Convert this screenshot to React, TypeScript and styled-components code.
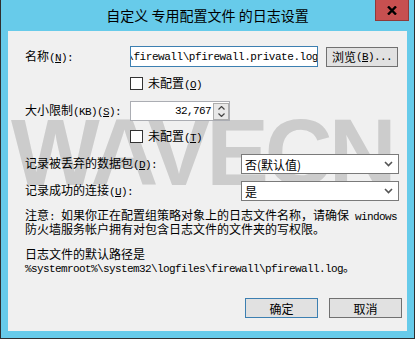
import styled, { createGlobalStyle } from 'styled-components'

const GlobalStyle = createGlobalStyle`
  html, body {
    margin: 0;
    padding: 0;
    background: #ffffff;
  }
  body {
    font-family: "Noto Sans CJK SC", "Liberation Sans", sans-serif;
    color: #000;
  }
`

const Window = styled.div`
  width: 415px;
  height: 339px;
  box-sizing: border-box;
  background: #67cbea;
  border: 1px solid #2f2f2f;
  border-top: none;
  padding: 0 7px 7px 7px;
  display: flex;
  flex-direction: column;
`

const TitleBar = styled.div`
  height: 31px;
  margin: 0 -7px;
  display: grid;
  grid-template-columns: 1fr auto 1fr;
  align-items: start;
`

const Title = styled.div`
  grid-column: 2;
  font-size: 14px;
  line-height: 30px;
  white-space: nowrap;
`

const CloseBtn = styled.div`
  grid-column: 3;
  justify-self: end;
  margin-right: 5px;
  width: 34px;
  height: 21px;
  box-sizing: border-box;
  background: #c75050;
  border: 1px solid #8f3a3a;
  border-top: none;
  display: flex;
  align-items: center;
  justify-content: center;
`

const Client = styled.div`
  flex: 1;
  background: #f0f0f0;
  position: relative;
  overflow: hidden;
`

const Watermark = styled.div`
  position: absolute;
  left: 3px;
  top: 75px;
  font-family: "Liberation Sans", Arial, sans-serif;
  font-weight: 700;
  font-size: 94px;
  line-height: 94px;
  letter-spacing: -4px;
  color: #cccccc;
  white-space: nowrap;
  pointer-events: none;
  z-index: 0;
`

const Content = styled.div`
  position: relative;
  z-index: 1;
  display: flex;
  flex-direction: column;
  padding: 15px 5px 0 17px;
  font-size: 12px;
`

const Row = styled.div<{ top: number; h: number }>`
  display: flex;
  align-items: center;
  margin-top: ${({ top }) => top}px;
  height: ${({ h }) => h}px;
`

const Label = styled.div<{ w: number }>`
  width: ${({ w }) => w}px;
  flex: none;
  font-size: 12px;
  line-height: 14px;
  white-space: nowrap;
`

const Mono = styled.span`
  font-family: "Liberation Mono", monospace;
  font-size: 11px;
  letter-spacing: -0.6px;
`

const PathInput = styled.div`
  width: 188px;
  height: 21px;
  box-sizing: border-box;
  border: 1px solid #3c7fb1;
  background: #fff;
  display: flex;
  justify-content: flex-end;
  align-items: center;
  overflow: hidden;
  white-space: nowrap;
  padding-right: 1px;
  font-family: "Liberation Mono", monospace;
  font-size: 11px;
  letter-spacing: -0.45px;
`

const Caret = styled.span`
  display: inline-block;
  width: 1px;
  height: 12px;
  background: #000;
  margin-left: -2px;
`

const Button = styled.div<{ w: number; primary?: boolean }>`
  width: ${({ w }) => w}px;
  height: 20px;
  box-sizing: border-box;
  background: #e1e1e1;
  border: 1px solid ${({ primary }) => (primary ? '#3c7fb1' : '#707070')};
  display: flex;
  align-items: center;
  justify-content: center;
  font-size: 12px;
  white-space: nowrap;
`

const BrowseButton = styled(Button)`
  margin-left: 8px;
`

const CheckRow = styled.div<{ top: number }>`
  display: flex;
  align-items: center;
  gap: 5px;
  margin-top: ${({ top }) => top}px;
  margin-left: 105px;
  height: 13px;
  font-size: 12px;
  line-height: 14px;
`

const Box = styled.span`
  width: 13px;
  height: 13px;
  box-sizing: border-box;
  border: 1px solid #333;
  background: #fff;
  flex: none;
`

const NumberField = styled.div`
  width: 100px;
  height: 20px;
  box-sizing: border-box;
  border: 1px solid #abadb3;
  background: #fff;
  display: flex;
`

const NumberValue = styled.div`
  flex: 1;
  text-align: right;
  padding-right: 2px;
  font-family: "Liberation Mono", monospace;
  font-size: 11px;
  letter-spacing: -0.6px;
  line-height: 18px;
`

const Spinner = styled.div`
  width: 16px;
  box-sizing: border-box;
  border: 1px solid #adadad;
  margin-top: 1px;
  background: #e8e8e8;
  display: flex;
  flex-direction: column;
`

const SpinHalf = styled.div`
  flex: 1;
  display: flex;
  align-items: center;
  justify-content: center;
`

const Select = styled.div`
  width: 158px;
  height: 20px;
  box-sizing: border-box;
  border: 1px solid #7a7a7a;
  background: #fff;
  display: flex;
  align-items: center;
  justify-content: space-between;
  padding: 0 5px 0 3px;
  font-size: 12px;
`

const Note = styled.div<{ top: number; lh: number }>`
  margin-top: ${({ top }) => top}px;
  font-size: 12px;
  line-height: ${({ lh }) => lh}px;
  white-space: nowrap;
`

const Footer = styled.div`
  display: flex;
  justify-content: flex-end;
  gap: 11px;
  margin-top: 22px;
`

function Chevron({ up }: { up?: boolean }) {
  return (
    <svg width="7" height="4" viewBox="0 0 7 4">
      <polyline
        points={up ? '0.5,3.5 3.5,0.5 6.5,3.5' : '0.5,0.5 3.5,3.5 6.5,0.5'}
        fill="none"
        stroke="#444"
        strokeWidth="1.2"
      />
    </svg>
  )
}

function DropArrow() {
  return (
    <svg width="9" height="6" viewBox="0 0 9 6">
      <polyline points="1,1 4.5,4.5 8,1" fill="none" stroke="#555" strokeWidth="1.6" />
    </svg>
  )
}

export default function App() {
  return (
    <>
      <GlobalStyle />
      <Window>
        <TitleBar>
          <Title>自定义 专用配置文件 的日志设置</Title>
          <CloseBtn>
            <svg width="10" height="9" viewBox="0 0 10 9">
              <path d="M1 0.5 L9 8.5 M9 0.5 L1 8.5" stroke="#000" strokeWidth="2.4" />
            </svg>
          </CloseBtn>
        </TitleBar>
        <Client>
          <Watermark>WAVECN</Watermark>
          <Content>
            <Row top={0} h={21}>
              <Label w={105}>
                名称<Mono>(<u>N</u>):</Mono>
              </Label>
              <PathInput>
                \firewall\pfirewall.private.log
                <Caret />
              </PathInput>
              <BrowseButton w={72}>
                浏览<Mono>(<u>B</u>)...</Mono>
              </BrowseButton>
            </Row>
            <CheckRow top={10}>
              <Box />
              <span>
                未配置<Mono>(<u>O</u>)</Mono>
              </span>
            </CheckRow>
            <Row top={11} h={20}>
              <Label w={105}>
                大小限制<Mono>(KB)(<u>S</u>):</Mono>
              </Label>
              <NumberField>
                <NumberValue>32,767</NumberValue>
                <Spinner>
                  <SpinHalf>
                    <Chevron up />
                  </SpinHalf>
                  <SpinHalf>
                    <Chevron />
                  </SpinHalf>
                </Spinner>
              </NumberField>
            </Row>
            <CheckRow top={9}>
              <Box />
              <span>
                未配置<Mono>(<u>T</u>)</Mono>
              </span>
            </CheckRow>
            <Row top={11} h={20}>
              <Label w={216}>
                记录被丢弃的数据包<Mono>(<u>D</u>):</Mono>
              </Label>
              <Select>
                <span>否(默认值)</span>
                <DropArrow />
              </Select>
            </Row>
            <Row top={7} h={20}>
              <Label w={216}>
                记录成功的连接<Mono>(<u>U</u>):</Mono>
              </Label>
              <Select>
                <span>是</span>
                <DropArrow />
              </Select>
            </Row>
            <Note top={8} lh={11}>
              注意<Mono>: </Mono>如果你正在配置组策略对象上的日志文件名称，请确保<Mono> windows</Mono>
              <br />
              防火墙服务帐户拥有对包含日志文件的文件夹的写权限。
            </Note>
            <Note top={13} lh={13}>
              日志文件的默认路径是
              <br />
              <Mono>%systemroot%\system32\logfiles\firewall\pfirewall.log</Mono>。
            </Note>
            <Footer>
              <Button w={73} primary>
                确定
              </Button>
              <Button w={73}>取消</Button>
            </Footer>
          </Content>
        </Client>
      </Window>
    </>
  )
}
